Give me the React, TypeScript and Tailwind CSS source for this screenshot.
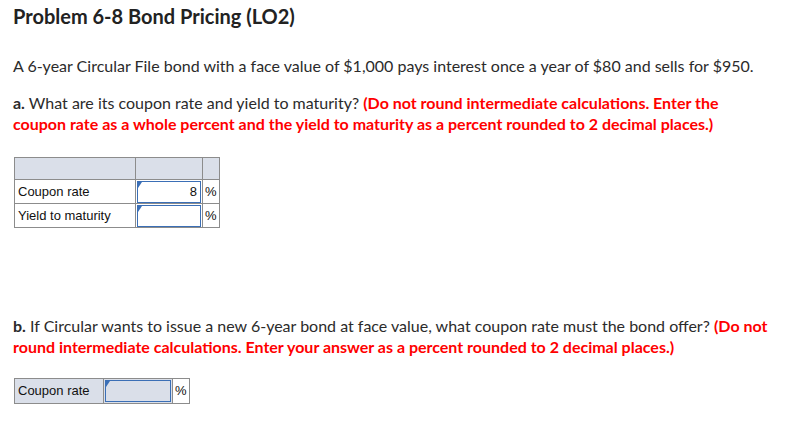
import React from 'react';

function Flag() {
  return <span className="absolute left-0 top-0 h-0 w-0 border-t-[6px] border-r-[4px] border-t-[#3b6fb6] border-r-transparent" />;
}

function InputCell({ value, bg, w }: { value?: string; bg: string; w: string }) {
  return (
    <td className={`${w} border border-[#8c8c8c] p-0`}>
      <div className={`relative mx-px h-[22px] border border-[#3b6fb6] ${bg} pr-[3px] text-right leading-[20px]`}>
        <Flag />
        {value}
      </div>
    </td>
  );
}

export default function App() {
  return (
    <div className="min-h-[424px] w-[793px] bg-white px-[13px] pt-[3px] text-[#2b2b2b]" style={{ fontFamily: 'Lato, "Open Sans", sans-serif' }}>
      <h1 className="text-[20px] font-bold leading-[26px] text-[#222]">Problem 6-8 Bond Pricing (LO2)</h1>

      <p className="mt-[26px] text-[16px] leading-[21px]">
        A 6-year Circular File bond with a face value of $1,000 pays interest once a year of $80 and sells for $950.
      </p>

      <p className="mt-[16px] pr-[50px] text-[16px] leading-[21px]">
        <span className="font-bold">a.</span> What are its coupon rate and yield to maturity?{' '}
        <span className="font-bold text-[#f00]">
          (Do not round intermediate calculations. Enter the coupon rate as a whole percent and the yield to maturity as a percent rounded to 2 decimal places.)
        </span>
      </p>

      <table
        className="mt-[23px] ml-px border-collapse text-[13px] text-[#111]"
        style={{ fontFamily: '"Liberation Sans", Arial, sans-serif' }}
      >
        <tbody>
          <tr className="h-[22px] bg-[#dadfe9]">
            <td className="w-[121px] border border-[#8c8c8c]"></td>
            <td className="w-[67px] border border-[#8c8c8c]"></td>
            <td className="w-[15px] border border-[#8c8c8c]"></td>
          </tr>
          <tr className="h-[24px]">
            <td className="border border-[#8c8c8c] px-[3px]">Coupon rate</td>
            <InputCell value="8" bg="bg-white" w="w-[67px]" />
            <td className="border border-[#8c8c8c] px-[2px]">%</td>
          </tr>
          <tr className="h-[24px]">
            <td className="border border-[#8c8c8c] px-[3px]">Yield to maturity</td>
            <InputCell bg="bg-white" w="w-[67px]" />
            <td className="border border-[#8c8c8c] px-[2px]">%</td>
          </tr>
        </tbody>
      </table>

      <p className="mt-[87px] text-[16px] leading-[21px]">
        <span className="font-bold">b.</span> If Circular wants to issue a new 6-year bond at face value, what coupon rate must the bond offer?{' '}
        <span className="font-bold text-[#f00]">
          (Do not round intermediate calculations. Enter your answer as a percent rounded to 2 decimal places.)
        </span>
      </p>

      <table
        className="mt-[21px] ml-px border-collapse text-[13px] text-[#111]"
        style={{ fontFamily: '"Liberation Sans", Arial, sans-serif' }}
      >
        <tbody>
          <tr className="h-[25px] bg-[#dadfe9]">
            <td className="w-[89px] border border-[#8c8c8c] px-[3px]">Coupon rate</td>
            <InputCell bg="bg-[#dadfe9]" w="w-[69px]" />
            <td className="w-[16px] border border-[#8c8c8c] bg-white px-[2px]">%</td>
          </tr>
        </tbody>
      </table>
    </div>
  );
}
